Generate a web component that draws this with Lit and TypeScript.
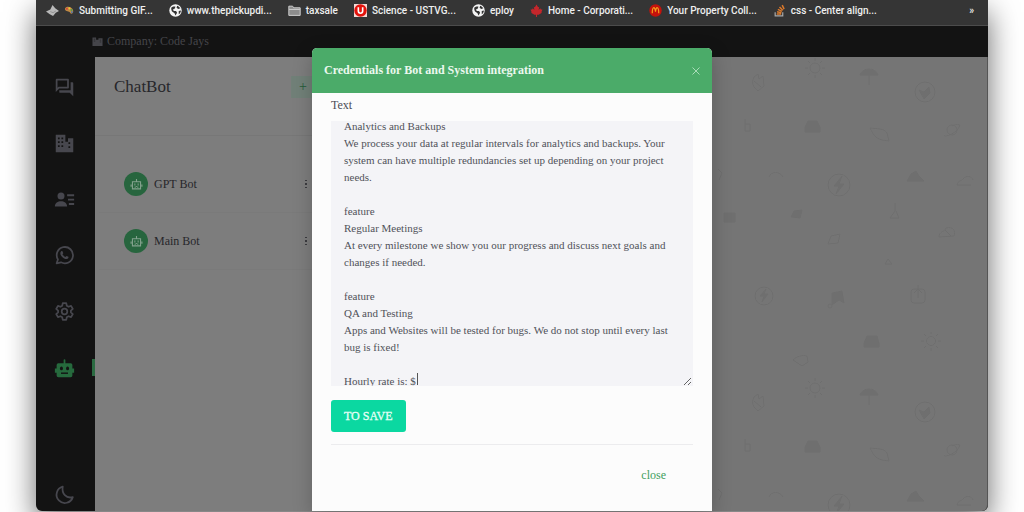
import { LitElement, html, css, svg } from "lit";
import { customElement } from "lit/decorators.js";
import { classMap } from "lit/directives/class-map.js";

const globe = svg`<circle cx="12" cy="12" r="11.5" fill="#f4f4f4"/><path d="M4 7c3-3 6-3 8-2l-2 4-3 1 2 3 4 0 2 3-3 5c-1-2-1-4-3-5-3-1-5-3-5-9zM15 3c3 1 5 3 6 5l-4 1-3-2zM18 13l4-1c0 3-2 6-4 7z" fill="#333"/>`;

const bookmarks = [
  {
    label: "Submitting GIF...",
    icon: svg`<path d="M12 2l5 6 7 5-6 3-5 6-6-3-7-5 8-4z" fill="#b9b9b9"/><path d="M8 14l5 2 5-3" stroke="#8a8a8a" stroke-width="1.5" fill="none"/>`,
    extra: svg`<path d="M3 7c4-5 13-3 17 2 4 6 2 11-2 12-4 0-2-4-6-5S0 13 3 7z" fill="#c08a45"/><circle cx="7" cy="9" r="2.5" fill="#d8453c"/><circle cx="13" cy="8" r="2.5" fill="#f0c832"/><circle cx="18" cy="12" r="2.5" fill="#4fa04a"/><circle cx="19" cy="17" r="2.2" fill="#3b6fc0"/>`,
  },
  { label: "www.thepickupdi...", icon: globe },
  {
    label: "taxsale",
    icon: svg`<path d="M1.500 4h7l2 3h12v14h-21z" fill="#8d8d8d" stroke="#d0d0d0" stroke-width="1.8"/><path d="M2 10h20" stroke="#d0d0d0" stroke-width="1.8"/>`,
  },
  {
    label: "Science - USTVG...",
    icon: svg`<rect width="24" height="24" fill="#f3d9d6"/><circle cx="12" cy="12" r="11.5" fill="#e3120b"/><path d="M8 6v7a4 4 0 0 0 8 0V6" fill="none" stroke="#fff" stroke-width="3"/>`,
  },
  { label: "eploy", icon: globe },
  {
    label: "Home - Corporati...",
    icon: svg`<path d="M12 1l3 5 2-1-1 6 3-3 1 2 3 0-2 5 1 1-6 4h-3l0 4h-2l0-4H8l-6-4 1-1-2-5 3 0 1-2 3 3-1-6 2 1z" fill="#c5262b"/>`,
  },
  {
    label: "Your Property Coll...",
    icon: svg`<circle cx="12" cy="12" r="11.5" fill="#c4120c"/><path d="M6 17c0-13 5-13 6-3 1-10 6-10 6 3" fill="none" stroke="#f5a21c" stroke-width="2.2"/>`,
  },
  {
    label: "css - Center align...",
    icon: svg`<path d="M4 15v7h14v-7" fill="none" stroke="#a9a9a9" stroke-width="2.2"/><path d="M7 18.500h8M7.500 14.500l8 1.500M9 10l7.500 3.500M12 5.500l6 6M17 2l3.500 7.500" stroke="#d9792c" stroke-width="2.8"/>`,
  },
];

const robotFace = svg`<path d="M12 2v4M4.500 7h15v13h-15zM2 12v4M22 12v4" fill="none" stroke="currentColor" stroke-width="2"/><path d="M9 10v4M15 10v4M8.500 17h2l1.500-2 1.500 2h2" fill="none" stroke="currentColor" stroke-width="1.8"/>`;

const navItems = [
  {
    label: "Chats",
    icon: svg`<path d="M15 4v7H5.200L4 12.200V4h11m1-2H3a1 1 0 0 0-1 1v14l4-4h10a1 1 0 0 0 1-1V3a1 1 0 0 0-1-1zm5 4h-2v9H6v2a1 1 0 0 0 1 1h11l4 4V7a1 1 0 0 0-1-1z" fill="currentColor"/>`,
  },
  {
    label: "Companies",
    icon: svg`<path fill-rule="evenodd" d="M2 2h11v8h3V6h6v16H2zM4.500 5v2h2V5zm4 0v2h2V5zm-4 4.500v2h2v-2zm4 0v2h2v-2zm-4 4.500v2h2v-2zm4 0v2h2v-2zm8-3.500v2h2v-2zm0 4.500v2h2v-2z" fill="currentColor"/>`,
  },
  {
    label: "Contacts",
    icon: svg`<circle cx="8" cy="8" r="4" fill="currentColor"/><path d="M1 20c0-8 14-8 14 0zM15 6h8v2.200h-8zM16 11h7v2.200h-7zM17 16h6v2.200h-6z" fill="currentColor"/>`,
  },
  {
    label: "WhatsApp",
    icon: svg`<path d="M3 21l1.500-4.500a9.300 9.300 0 1 1 3.500 3.300z" fill="none" stroke="currentColor" stroke-width="2" stroke-linejoin="round"/><path d="M8 7.500c1-1 1.800-.5 2 .3l.6 1.500-.9 1.400c.7 1.400 1.800 2.300 3.300 3l1.300-1.200 2.200 1c.3 1.200-.8 2.600-2.500 2.600-3.500-.3-6.800-3.800-6.800-6.800 0-.8.300-1.400.8-1.800z" fill="currentColor"/>`,
  },
  {
    label: "Settings",
    icon: svg`<path d="M10 2.500h4l.6 2.900 2 1.200 2.900-1 2 3.500-2.200 1.900v2l2.200 1.900-2 3.500-2.900-1-2 1.200-.6 2.900h-4l-.6-2.900-2-1.200-2.900 1-2-3.500L4.700 13v-2L2.500 9.100l2-3.500 2.900 1 2-1.200z" fill="none" stroke="currentColor" stroke-width="2" stroke-linejoin="round"/><circle cx="12" cy="12" r="3.2" fill="none" stroke="currentColor" stroke-width="2"/>`,
  },
  {
    label: "Bots",
    active: true,
    icon: svg`<path d="M11 7V3.500a1 1 0 1 1 2 0V7h6a2 2 0 0 1 2 2v4h2v5h-2v3a2 2 0 0 1-2 2H5a2 2 0 0 1-2-2v-3H1v-5h2V9a2 2 0 0 1 2-2z" fill="currentColor"/><ellipse cx="8.500" cy="13" rx="1.700" ry="2.200" fill="#131313"/><ellipse cx="15.500" cy="13" rx="1.700" ry="2.200" fill="#131313"/><path d="M8 18.500h8" stroke="#131313" stroke-width="1.6"/>`,
  },
];

const doodles = svg`
  <path d="M47 20c-3 6-1 10 4 14l6-5-1-10-4 3-1-5zM47 24l7 6"/>
  <circle cx="108" cy="11" r="5"/><path d="M108 1v3M108 18v3M98 11h3M115 11h3M101 4l2 2M115 18l-2-2M101 18l2-2M115 4l-2 2"/>
  <path class="solid" d="M153 18c2-8 16-8 18 0z"/><path d="M162 18v10"/>
  <circle cx="218" cy="35" r="10"/><path class="solid" d="M212 33l5 2 5-5 1 6-6 6z"/>
  <path d="M38 62v12h5v-7h-5"/>
  <path class="solid" d="M98 70l3-6h9l3 6v5H98z"/>
  <path d="M163 71c7 1 14 0 17 5l2 8-7-1c-7-2-9-6-12-12z"/>
  <circle cx="245" cy="73" r="5"/><path d="M238 78c-4 3 12 0 15-10-3-1-7 0-8 1"/>
  <path d="M11 112l4 4-3 7M62 120c2-6 11-6 14 0"/>
  <circle cx="132" cy="128" r="11"/><path class="solid" d="M135 119l-8 10h5l-3 8 8-10h-5z"/>
  <path class="solid" d="M200 124l4-7 5-3 3 5 5 5z"/>
  <path d="M250 128c1-5 5-4 6-6 3-4 9-3 10 1M250 128h14"/>
  <path class="solid" d="M17 156h11v9H17z"/>
  <path class="solid" d="M84 160l3-6 8-1-2 8z"/>
  <path d="M188 146v8l-5 7h9l-3-7"/>
  <path d="M232 180c0-6 6-5 7-9 7-2 10 3 8 8zM238 173l6 6"/>
  <path d="M121 187l3-8 9-2-2 9zM178 207l3-5 4 5z"/>
  <circle cx="57" cy="239" r="9"/><path class="solid" d="M59 232l-6 7h4l-2 6 6-8h-4z"/>
  <path class="solid" d="M125 236l10-2 2 12-5-3-7 5z"/><circle cx="123" cy="249" r="2"/>
  <rect x="204" y="232" width="14" height="14" rx="3"/><path d="M211 228v13M207 236l4-4 4 4"/>
  <path class="solid" d="M157 286l3-7h10l2 7v4h-15z"/>
  <circle cx="224" cy="284" r="4.5"/><path d="M224 275v2M224 291v3M214 284h3M231 284h3M217 277l2 2M231 291l-2-2M217 291l2-2M231 277l-2 2"/>
  <path d="M86 303c4-4 9-5 14-4l1 6-6 4z"/>
`;

const note = `Analytics and Backups
We process your data at regular intervals for analytics and backups. Your system can have multiple redundancies set up depending on your project needs.

feature
Regular Meetings
At every milestone we show you our progress and discuss next goals and changes if needed.

feature
QA and Testing
Apps and Websites will be tested for bugs. We do not stop until every last bug is fixed!

Hourly rate is: $`;

@customElement("app-root")
class AppRoot extends LitElement {
  static styles = css`
    :host {
      display: block;
      height: 100vh;
      overflow: hidden;
      background: #fff;
      font-family: "Liberation Serif", serif;
      font-size: 12px;
    }
    * {
      box-sizing: border-box;
    }
    button {
      font: inherit;
      border: 0;
      padding: 0;
      background: none;
      color: inherit;
      cursor: pointer;
    }
    a {
      color: inherit;
      text-decoration: none;
    }
    svg {
      display: block;
      flex: none;
    }
    .window {
      position: relative;
      display: flex;
      flex-direction: column;
      height: calc(100vh - 1px);
      margin: 0 36px;
      border-radius: 0 0 6px 6px;
      background: #131313;
      box-shadow: 0 12px 30px rgba(0, 0, 0, 0.6);
    }
    .bookmarks {
      display: flex;
      align-items: center;
      gap: 16px;
      height: 26px;
      padding: 0 14px 5px 10px;
      background: #353535;
      border-bottom: 1px solid #4c4c4c;
      color: #efefef;
      font-family: Roboto, "Liberation Sans", sans-serif;
      font-size: 10px;
      font-weight: 500;
      white-space: nowrap;
    }
    .bookmark {
      display: flex;
      align-items: center;
      gap: 5px;
    }
    .more {
      margin-left: auto;
    }
    .company {
      display: flex;
      align-items: center;
      gap: 4px;
      height: 31px;
      padding-left: 56px;
      color: #45454a;
    }
    .main {
      display: flex;
      flex: 1;
      min-height: 0;
    }
    .rail {
      display: flex;
      flex-direction: column;
      width: 59px;
      padding: 2px 0 6px;
      color: #47474e;
    }
    .rail-item {
      display: flex;
      align-items: center;
      justify-content: space-between;
      width: 100%;
      height: 56px;
      padding-left: 18px;
    }
    .rail-item.active {
      color: #266a3d;
    }
    .rail-item.active::after {
      content: "";
      width: 3px;
      height: 17px;
      background: #2b6b42;
    }
    .theme {
      margin-top: auto;
      padding-left: 18px;
    }
    .list {
      width: 230px;
      background: #7d7d7d;
      color: #27272b;
    }
    .list-head {
      display: flex;
      align-items: flex-start;
      justify-content: space-between;
      height: 79px;
      padding: 19px 10px 0 19px;
      border-bottom: 1px solid #777;
    }
    .list-title {
      margin: 0;
      font-size: 17px;
      line-height: 22px;
      font-weight: 400;
    }
    .add {
      width: 24px;
      height: 22px;
      background: #718078;
      color: #245c3a;
      font-size: 14px;
    }
    .bots {
      margin: 0;
      padding: 20px 0 0;
      list-style: none;
    }
    .bot {
      display: flex;
      align-items: center;
      gap: 6px;
      height: 57px;
      margin-left: 4px;
      padding: 0 15px 0 25px;
      border-bottom: 1px solid #7a7a7a;
    }
    .avatar {
      display: grid;
      place-items: center;
      width: 24px;
      height: 24px;
      border-radius: 50%;
      background: #27653e;
      color: #84a28e;
    }
    .dots {
      margin-left: auto;
    }
    .chat {
      display: flex;
      flex: 1;
      justify-content: flex-end;
      background: #757575;
      border-radius: 0 0 6px 0;
      border-right: 1px solid #555;
    }
    .doodle {
      fill: none;
      stroke: #6e6e6e;
      stroke-width: 1px;
    }
    .solid {
      fill: #6f6f6f;
    }
    .modal {
      position: absolute;
      top: 48px;
      bottom: 0;
      left: 0;
      right: 0;
      width: min(400px, 90%);
      margin: 0 auto;
      background: #fcfcfc;
      border-radius: 5px 5px 0 0;
      box-shadow: 0 6px 20px rgba(0, 0, 0, 0.22);
      color: #4b4d55;
    }
    .modal-head {
      display: flex;
      align-items: center;
      justify-content: space-between;
      height: 45px;
      padding: 0 12px;
      border-radius: 5px 5px 0 0;
      background: #4bab69;
      color: #ecf8ef;
    }
    .modal-title {
      margin: 0;
      font-size: 12px;
      font-weight: 700;
    }
    .dismiss {
      color: #a9dcb8;
    }
    .form {
      display: flex;
      flex-direction: column;
      padding: 4px 19px 0;
    }
    .label {
      line-height: 17px;
    }
    .field {
      position: relative;
      margin-top: 7px;
    }
    .text {
      display: block;
      width: 100%;
      height: 265px;
      padding: 0 12px;
      border: 1px solid #f4f4f7;
      border-width: 0 1px;
      outline: 0;
      background: #f4f4f7;
      color: #505259;
      font: 11px/17px "Liberation Serif", serif;
      resize: vertical;
      scrollbar-width: none;
    }
    .caret {
      position: absolute;
      left: 86px;
      bottom: 1px;
      width: 1px;
      height: 12px;
      background: #555;
    }
    .save {
      align-self: flex-start;
      height: 32px;
      margin-top: 14px;
      padding: 0 13px;
      border-radius: 3px;
      background: #0bd8a1;
      color: #e4fff6;
      -webkit-text-stroke: 0.3px currentColor;
    }
    .rule {
      width: 100%;
      height: 1px;
      margin: 12px 0 0;
      border: 0;
      background: #ececee;
    }
    .close {
      align-self: flex-end;
      height: 32px;
      margin: 14px 14px 0 0;
      padding: 0 13px;
      color: #3f9f5c;
    }
  `;

  firstUpdated() {
    this.renderRoot.querySelector("textarea")!.scrollTop = 3;
  }

  renderIcon(icon: unknown, size: number) {
    return html`<svg width=${size} height=${size} viewBox="0 0 24 24" aria-hidden="true">${icon}</svg>`;
  }

  render() {
    return html`
      <div class="window">
        <nav class="bookmarks" aria-label="Bookmarks">
          ${bookmarks.map(
            (b) => html`<a class="bookmark" href="#">
              ${this.renderIcon(b.icon, 13)}${b.extra ? this.renderIcon(b.extra, 10) : ""}<span>${b.label}</span>
            </a>`,
          )}
          <button class="more">»</button>
        </nav>
        <header class="company">
          <svg width="11" height="11" viewBox="0 0 24 24" aria-hidden="true">
            <path d="M1 3h8v5h5V5h9v17H1z" fill="currentColor" />
            <path d="M4 7h3M4 11h3M17 9h3M17 13h3" stroke="#222" stroke-width="1.5" />
          </svg>
          <span>Company: Code Jays</span>
        </header>
        <div class="main">
          <nav class="rail" aria-label="Sections">
            ${navItems.map(
              (n) => html`<button
                class=${classMap({ "rail-item": true, active: !!n.active })}
                aria-label=${n.label}
              >
                ${this.renderIcon(n.icon, 21)}
              </button>`,
            )}
            <button class="theme" aria-label="Dark mode">
              ${this.renderIcon(
                svg`<path d="M10 3a9.500 9.500 0 1 0 11.500 12C14 17 8.500 11 10 3z" fill="none" stroke="currentColor" stroke-width="2" stroke-linejoin="round"/>`,
                21,
              )}
            </button>
          </nav>
          <section class="list">
            <div class="list-head">
              <h1 class="list-title">ChatBot</h1>
              <button class="add" aria-label="Add bot">+</button>
            </div>
            <ul class="bots">
              ${["GPT Bot", "Main Bot"].map(
                (name) => html`<li class="bot">
                  <span class="avatar">${this.renderIcon(robotFace, 13)}</span>
                  <span>${name}</span>
                  <button class="dots" aria-label="Bot menu">
                    <svg width="8" height="10" viewBox="0 0 8 10">
                      <path d="M3 1h2v1H3zM3 4h2v2H3zM3 8h2v1H3z" fill="#3c3c40" />
                    </svg>
                  </button>
                </li>`,
              )}
            </ul>
          </section>
          <section class="chat">
            <svg width="280" height="100%" aria-hidden="true">
              <defs>
                <pattern id="doodles" width="280" height="320" patternUnits="userSpaceOnUse">
                  <g class="doodle">${doodles}</g>
                </pattern>
              </defs>
              <rect width="100%" height="100%" fill="url(#doodles)" />
            </svg>
          </section>
        </div>
        <div class="modal" role="dialog" aria-labelledby="modal-title">
          <div class="modal-head">
            <h2 class="modal-title" id="modal-title">Credentials for Bot and System integration</h2>
            <button class="dismiss" aria-label="Dismiss">
              <svg width="8" height="8" viewBox="0 0 8 8">
                <path d="M.5.500l7 7M7.500.500l-7 7" stroke="currentColor" />
              </svg>
            </button>
          </div>
          <form class="form">
            <label class="label" for="text">Text</label>
            <div class="field">
              <textarea class="text" id="text" spellcheck="false" .value=${note}></textarea>
              <span class="caret"></span>
            </div>
            <button class="save" type="button">TO SAVE</button>
            <hr class="rule" />
            <button class="close" type="button">close</button>
          </form>
        </div>
      </div>
    `;
  }
}
